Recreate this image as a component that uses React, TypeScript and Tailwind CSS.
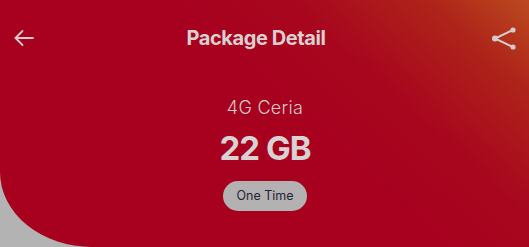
export default function App() {
  return (
    <div className="h-[247px] w-[529px] overflow-hidden bg-[#b4b3b3]">
      <div
        className="flex h-full flex-col rounded-bl-[92px_75px] bg-[#a7011f] bg-[linear-gradient(222deg,#bb4a1f_0%,#ae2319_13%,#a8061e_30%,#a7011f_45%)] text-[#d6cccc]"
        style={{ fontFamily: "Inter, 'Noto Sans', sans-serif" }}
      >
        <header className="grid grid-cols-[60px_1fr_60px] items-center pt-[23px]">
          <svg className="ml-3" width="24" height="24" viewBox="0 0 24 24" fill="none" stroke="#d6cccc" strokeWidth="1.8" strokeLinecap="round" strokeLinejoin="round">
            <path d="M21 12H3.5" />
            <path d="M10.5 5L3.5 12l7 7" />
          </svg>
          <h1 className="pr-[17px] text-center text-[20px] font-bold tracking-[-0.4px] text-[#d9d0d0]">Package Detail</h1>
          <svg className="ml-auto mr-[12px]" width="28" height="28" viewBox="0 0 28 28" fill="#d3cccc" stroke="#d3cccc" strokeWidth="2">
            <path d="M24 6L6 14.5L24 23" fill="none" />
            <circle cx="24" cy="6" r="2.6" stroke="none" />
            <circle cx="6" cy="14.5" r="3" stroke="none" />
            <circle cx="24" cy="23" r="2.6" stroke="none" />
          </svg>
        </header>

        <div className="mt-[46px] flex flex-col items-center pl-[1px]">
          <p className="text-[18px] font-light leading-none tracking-[0.3px]">4G Ceria</p>
          <p className="mt-[15px] text-[33px] font-bold leading-none tracking-[-1px] text-[#d9d2d2]">22 GB</p>
          <span className="mt-[16px] rounded-full bg-[#b3b1b1] px-[13px] py-[6px] text-[12.5px] leading-[18px] text-[#24243a]">
            One Time
          </span>
        </div>
      </div>
    </div>
  );
}
